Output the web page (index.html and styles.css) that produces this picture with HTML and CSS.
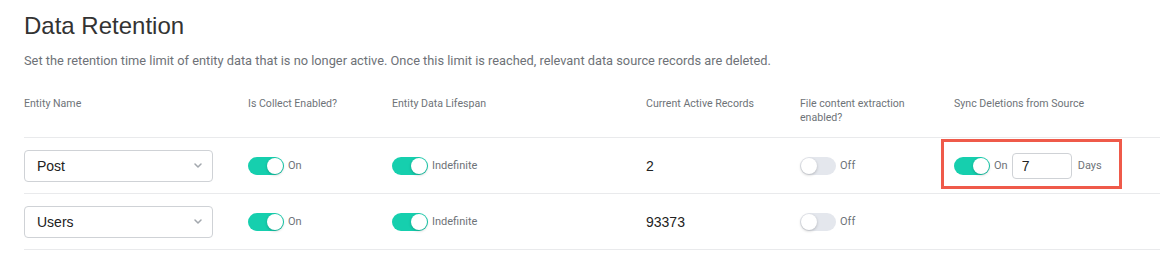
FILE: index.html
```html
<!DOCTYPE html>
<html lang="en">
<head>
    <meta charset="UTF-8">
    <meta name="viewport" content="width=device-width, initial-scale=1.0">
    <title>Data Retention</title>
    <link rel="stylesheet" href="styles.css">
</head>
<body>
    <div class="retention">
        <h1 class="page-title">Data Retention</h1>
        <p class="page-desc">Set the retention time limit of entity data that is no longer active. Once this limit is reached, relevant data source records are deleted.</p>

        <div class="grid-row header-row">
            <div class="head-cell">Entity Name</div>
            <div class="head-cell">Is Collect Enabled?</div>
            <div class="head-cell">Entity Data Lifespan</div>
            <div class="head-cell">Current Active Records</div>
            <div class="head-cell narrow">File content extraction enabled?</div>
            <div class="head-cell">Sync Deletions from Source</div>
        </div>

        <div class="grid-row data-row">
            <div class="cell">
                <div class="select-box">
                    <span>Post</span>
                    <svg class="chevron" width="8" height="5" viewBox="0 0 8 5"><path d="M1 1 L4 4 L7 1" fill="none" stroke="#a3a8ae" stroke-width="1.5" stroke-linecap="round" stroke-linejoin="round"/></svg>
                </div>
            </div>
            <div class="cell"><span class="toggle on"><span class="knob"></span></span><span class="toggle-label">On</span></div>
            <div class="cell"><span class="toggle on"><span class="knob"></span></span><span class="toggle-label">Indefinite</span></div>
            <div class="cell count">2</div>
            <div class="cell"><span class="toggle"><span class="knob"></span></span><span class="toggle-label">Off</span></div>
            <div class="cell sync-cell">
                <span class="toggle on"><span class="knob"></span></span><span class="toggle-label">On</span>
                <input class="days-input" type="text" value="7">
                <span class="toggle-label days">Days</span>
            </div>
            <div class="highlight"></div>
        </div>

        <div class="grid-row data-row">
            <div class="cell">
                <div class="select-box">
                    <span>Users</span>
                    <svg class="chevron" width="8" height="5" viewBox="0 0 8 5"><path d="M1 1 L4 4 L7 1" fill="none" stroke="#a3a8ae" stroke-width="1.5" stroke-linecap="round" stroke-linejoin="round"/></svg>
                </div>
            </div>
            <div class="cell"><span class="toggle on"><span class="knob"></span></span><span class="toggle-label">On</span></div>
            <div class="cell"><span class="toggle on"><span class="knob"></span></span><span class="toggle-label">Indefinite</span></div>
            <div class="cell count">93373</div>
            <div class="cell"><span class="toggle"><span class="knob"></span></span><span class="toggle-label">Off</span></div>
            <div class="cell"></div>
        </div>
    </div>
</body>
</html>
```

FILE: styles.css
```css
body {
    margin: 0;
    background-color: #ffffff;
    font-family: 'Roboto', 'Liberation Sans', sans-serif;
    color: #333333;
}
.retention {
    padding: 12px 0 0 24px;
}
.page-title {
    margin: 0;
    font-family: 'Liberation Sans', Arial, sans-serif;
    font-size: 24px;
    line-height: 28px;
    font-weight: 400;
    color: #333333;
}
.page-desc {
    margin: 12px 0 0;
    font-size: 12.8px;
    line-height: 18px;
    color: #6e7277;
}
.grid-row {
    display: grid;
    grid-template-columns: 224px 144px 254px 154px 154px 1fr;
    border-bottom: 1px solid #e9eaec;
}
.header-row {
    margin-top: 27px;
    padding-bottom: 12px;
    align-items: start;
}
.head-cell {
    font-size: 10.6px;
    line-height: 14px;
    color: #6e7378;
}
.head-cell.narrow {
    max-width: 120px;
}
.data-row {
    position: relative;
    height: 55px;
    align-items: center;
}
.cell {
    display: flex;
    align-items: center;
}
.select-box {
    box-sizing: border-box;
    width: 189px;
    height: 32px;
    padding: 0 10px 0 12px;
    border: 1px solid #cfd2d6;
    border-radius: 4px;
    display: flex;
    align-items: center;
    justify-content: space-between;
    font-family: 'Liberation Sans', Arial, sans-serif;
    font-size: 14px;
    color: #222222;
}
.toggle {
    position: relative;
    width: 36px;
    height: 18px;
    border-radius: 9px;
    background-color: #e4e7ed;
    flex-shrink: 0;
}
.toggle.on {
    background-color: #16cfae;
}
.knob {
    position: absolute;
    top: 1px;
    left: 1px;
    width: 16px;
    height: 16px;
    border-radius: 50%;
    background-color: #ffffff;
    box-shadow: 0 1px 3px rgba(0, 0, 0, 0.22);
}
.toggle.on .knob {
    left: 19px;
}
.toggle-label {
    margin-left: 4px;
    font-size: 11px;
    color: #6e7378;
}
.count {
    font-family: 'Liberation Sans', Arial, sans-serif;
    font-size: 14px;
    color: #222222;
}
.days-input {
    box-sizing: border-box;
    width: 60px;
    height: 26px;
    margin-left: 4px;
    padding: 0 9px;
    border: 1px solid #cfd2d6;
    border-radius: 4px;
    font-family: 'Liberation Sans', Arial, sans-serif;
    font-size: 14px;
    color: #222222;
    outline: none;
}
.toggle-label.days {
    margin-left: 6px;
}
.highlight {
    position: absolute;
    left: 917px;
    top: 1px;
    width: 181px;
    height: 50px;
    box-sizing: border-box;
    border: 3px solid #ef5a4a;
    pointer-events: none;
}
```
